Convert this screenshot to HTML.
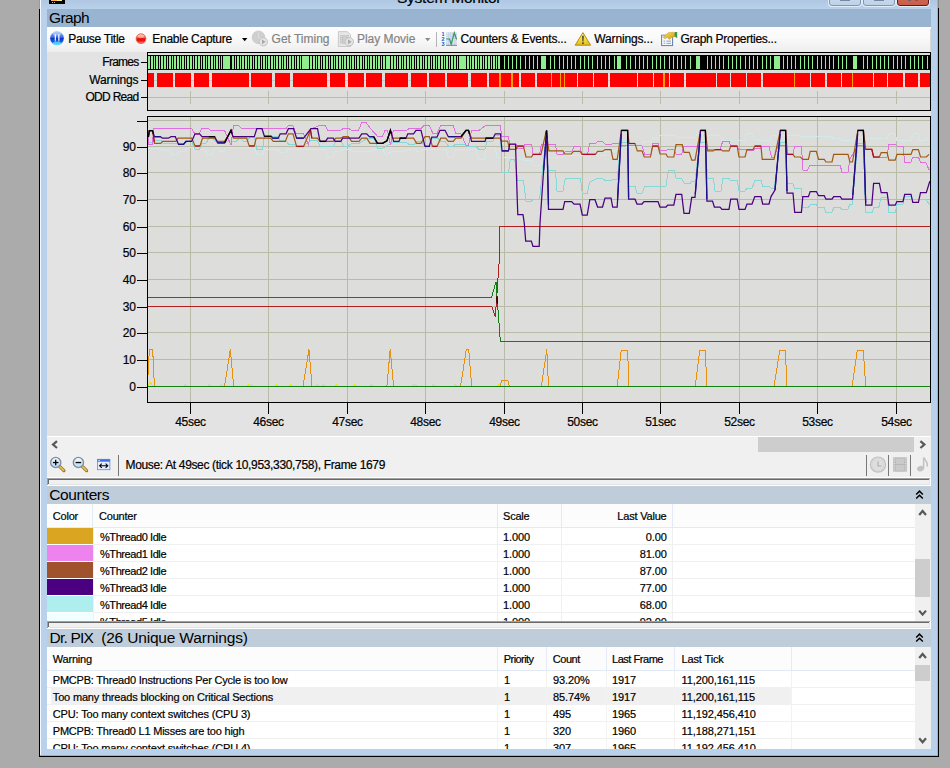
<!DOCTYPE html>
<html><head><meta charset="utf-8"><title>System Monitor</title>
<style>
html,body{margin:0;padding:0}
body{width:950px;height:768px;overflow:hidden;background:#ababab;position:relative;font-family:"Liberation Sans",sans-serif}
.a{position:absolute}
.t{position:absolute;white-space:pre;line-height:1;font-family:"Liberation Sans",sans-serif;-webkit-text-stroke:0.2px currentColor}
</style></head><body>

<div class="a" style="left:39px;top:-10px;width:900px;height:767px;background:#000"></div>
<div class="a" style="left:39px;top:0;width:1px;height:9px;background:#9a9a9a"></div>
<div class="a" style="left:938px;top:0;width:1px;height:8px;background:#8a8a8a"></div>
<div class="a" style="left:40px;top:-10px;width:898px;height:766px;background:#b9d1ea"></div>
<div class="a" style="left:40px;top:0;width:1px;height:756px;background:#f4f8fc"></div>
<div class="a" style="left:937px;top:-10px;width:1px;height:766px;background:#4cd4f4"></div>
<div class="a" style="left:40px;top:755px;width:898px;height:1px;background:#30d8fa"></div>
<div class="a" style="left:41px;top:0;width:896px;height:9px;background:linear-gradient(#afc7e3,#b9d1ea)"></div>
<div class="a" style="left:47px;top:9px;width:884px;height:740px;background:#f0f0f0"></div>
<div class="a" style="left:47px;top:9px;width:884px;height:18px;background:#99b4d1"></div>
<div class="a" style="left:47px;top:27px;width:884px;height:25px;background:linear-gradient(#fdfdfd,#fafafa 40%,#eeeeee)"></div>
<div class="a" style="left:930px;top:29px;width:1px;height:22px;background:#d8d8d8"></div>
<div class="a" style="left:47px;top:52px;width:884px;height:384px;background:#e3e3e3"></div>
<svg width="950" height="768" viewBox="0 0 950 768" style="position:absolute;left:0;top:0" shape-rendering="crispEdges">
<rect x="147" y="52" width="784" height="59" fill="#dddddb"/>
<rect x="148" y="55" width="782" height="15" fill="#000"/>
<rect x="148" y="56" width="351" height="13" fill="#90ee90"/>
<rect x="150" y="56" width="1" height="13" fill="#000"/><rect x="153" y="56" width="1" height="13" fill="#000"/><rect x="155" y="56" width="1" height="13" fill="#000"/><rect x="158" y="56" width="1" height="13" fill="#000"/><rect x="160" y="56" width="1" height="13" fill="#000"/><rect x="163" y="56" width="1" height="13" fill="#000"/><rect x="166" y="56" width="1" height="13" fill="#000"/><rect x="168" y="56" width="1" height="13" fill="#000"/><rect x="171" y="56" width="1" height="13" fill="#000"/><rect x="173" y="56" width="1" height="13" fill="#000"/><rect x="176" y="56" width="1" height="13" fill="#000"/><rect x="179" y="56" width="1" height="13" fill="#000"/><rect x="181" y="56" width="1" height="13" fill="#000"/><rect x="184" y="56" width="1" height="13" fill="#000"/><rect x="186" y="56" width="1" height="13" fill="#000"/><rect x="189" y="56" width="1" height="13" fill="#000"/><rect x="192" y="56" width="1" height="13" fill="#000"/><rect x="194" y="56" width="1" height="13" fill="#000"/><rect x="197" y="56" width="1" height="13" fill="#000"/><rect x="200" y="56" width="1" height="13" fill="#000"/><rect x="202" y="56" width="1" height="13" fill="#000"/><rect x="205" y="56" width="1" height="13" fill="#000"/><rect x="207" y="56" width="1" height="13" fill="#000"/><rect x="210" y="56" width="1" height="13" fill="#000"/><rect x="213" y="56" width="1" height="13" fill="#000"/><rect x="215" y="56" width="1" height="13" fill="#000"/><rect x="218" y="56" width="1" height="13" fill="#000"/><rect x="220" y="56" width="1" height="13" fill="#000"/><rect x="223" y="56" width="1" height="13" fill="#000"/><rect x="226" y="56" width="1" height="13" fill="#000"/><rect x="228" y="56" width="1" height="13" fill="#000"/><rect x="231" y="56" width="1" height="13" fill="#000"/><rect x="234" y="56" width="1" height="13" fill="#000"/><rect x="236" y="56" width="1" height="13" fill="#000"/><rect x="239" y="56" width="1" height="13" fill="#000"/><rect x="241" y="56" width="1" height="13" fill="#000"/><rect x="244" y="56" width="1" height="13" fill="#000"/><rect x="247" y="56" width="1" height="13" fill="#000"/><rect x="249" y="56" width="1" height="13" fill="#000"/><rect x="252" y="56" width="1" height="13" fill="#000"/><rect x="254" y="56" width="1" height="13" fill="#000"/><rect x="257" y="56" width="1" height="13" fill="#000"/><rect x="260" y="56" width="1" height="13" fill="#000"/><rect x="262" y="56" width="1" height="13" fill="#000"/><rect x="265" y="56" width="1" height="13" fill="#000"/><rect x="267" y="56" width="1" height="13" fill="#000"/><rect x="270" y="56" width="1" height="13" fill="#000"/><rect x="273" y="56" width="1" height="13" fill="#000"/><rect x="275" y="56" width="1" height="13" fill="#000"/><rect x="278" y="56" width="1" height="13" fill="#000"/><rect x="281" y="56" width="1" height="13" fill="#000"/><rect x="283" y="56" width="1" height="13" fill="#000"/><rect x="286" y="56" width="1" height="13" fill="#000"/><rect x="288" y="56" width="1" height="13" fill="#000"/><rect x="291" y="56" width="1" height="13" fill="#000"/><rect x="294" y="56" width="1" height="13" fill="#000"/><rect x="296" y="56" width="1" height="13" fill="#000"/><rect x="299" y="56" width="1" height="13" fill="#000"/><rect x="301" y="56" width="1" height="13" fill="#000"/><rect x="304" y="56" width="1" height="13" fill="#000"/><rect x="307" y="56" width="1" height="13" fill="#000"/><rect x="309" y="56" width="1" height="13" fill="#000"/><rect x="312" y="56" width="1" height="13" fill="#000"/><rect x="315" y="56" width="1" height="13" fill="#000"/><rect x="317" y="56" width="1" height="13" fill="#000"/><rect x="320" y="56" width="1" height="13" fill="#000"/><rect x="322" y="56" width="1" height="13" fill="#000"/><rect x="325" y="56" width="1" height="13" fill="#000"/><rect x="328" y="56" width="1" height="13" fill="#000"/><rect x="330" y="56" width="1" height="13" fill="#000"/><rect x="333" y="56" width="1" height="13" fill="#000"/><rect x="335" y="56" width="1" height="13" fill="#000"/><rect x="338" y="56" width="1" height="13" fill="#000"/><rect x="341" y="56" width="1" height="13" fill="#000"/><rect x="343" y="56" width="1" height="13" fill="#000"/><rect x="346" y="56" width="1" height="13" fill="#000"/><rect x="349" y="56" width="1" height="13" fill="#000"/><rect x="351" y="56" width="1" height="13" fill="#000"/><rect x="354" y="56" width="1" height="13" fill="#000"/><rect x="356" y="56" width="1" height="13" fill="#000"/><rect x="359" y="56" width="1" height="13" fill="#000"/><rect x="362" y="56" width="1" height="13" fill="#000"/><rect x="364" y="56" width="1" height="13" fill="#000"/><rect x="367" y="56" width="1" height="13" fill="#000"/><rect x="369" y="56" width="1" height="13" fill="#000"/><rect x="372" y="56" width="1" height="13" fill="#000"/><rect x="375" y="56" width="1" height="13" fill="#000"/><rect x="377" y="56" width="1" height="13" fill="#000"/><rect x="380" y="56" width="1" height="13" fill="#000"/><rect x="382" y="56" width="1" height="13" fill="#000"/><rect x="385" y="56" width="1" height="13" fill="#000"/><rect x="388" y="56" width="1" height="13" fill="#000"/><rect x="390" y="56" width="1" height="13" fill="#000"/><rect x="393" y="56" width="1" height="13" fill="#000"/><rect x="396" y="56" width="1" height="13" fill="#000"/><rect x="398" y="56" width="1" height="13" fill="#000"/><rect x="401" y="56" width="1" height="13" fill="#000"/><rect x="403" y="56" width="1" height="13" fill="#000"/><rect x="406" y="56" width="1" height="13" fill="#000"/><rect x="409" y="56" width="1" height="13" fill="#000"/><rect x="411" y="56" width="1" height="13" fill="#000"/><rect x="414" y="56" width="1" height="13" fill="#000"/><rect x="416" y="56" width="1" height="13" fill="#000"/><rect x="419" y="56" width="1" height="13" fill="#000"/><rect x="422" y="56" width="1" height="13" fill="#000"/><rect x="424" y="56" width="1" height="13" fill="#000"/><rect x="427" y="56" width="1" height="13" fill="#000"/><rect x="430" y="56" width="1" height="13" fill="#000"/><rect x="432" y="56" width="1" height="13" fill="#000"/><rect x="435" y="56" width="1" height="13" fill="#000"/><rect x="437" y="56" width="1" height="13" fill="#000"/><rect x="440" y="56" width="1" height="13" fill="#000"/><rect x="443" y="56" width="1" height="13" fill="#000"/><rect x="445" y="56" width="1" height="13" fill="#000"/><rect x="448" y="56" width="1" height="13" fill="#000"/><rect x="450" y="56" width="1" height="13" fill="#000"/><rect x="453" y="56" width="1" height="13" fill="#000"/><rect x="456" y="56" width="1" height="13" fill="#000"/><rect x="458" y="56" width="1" height="13" fill="#000"/><rect x="461" y="56" width="1" height="13" fill="#000"/><rect x="463" y="56" width="1" height="13" fill="#000"/><rect x="466" y="56" width="1" height="13" fill="#000"/><rect x="469" y="56" width="1" height="13" fill="#000"/><rect x="471" y="56" width="1" height="13" fill="#000"/><rect x="474" y="56" width="1" height="13" fill="#000"/><rect x="477" y="56" width="1" height="13" fill="#000"/><rect x="479" y="56" width="1" height="13" fill="#000"/><rect x="482" y="56" width="1" height="13" fill="#000"/><rect x="484" y="56" width="1" height="13" fill="#000"/><rect x="487" y="56" width="1" height="13" fill="#000"/><rect x="490" y="56" width="1" height="13" fill="#000"/><rect x="492" y="56" width="1" height="13" fill="#000"/><rect x="495" y="56" width="1" height="13" fill="#000"/><rect x="497" y="56" width="1" height="13" fill="#000"/>
<rect x="499" y="56" width="1" height="13" fill="#90ee90"/><rect x="504" y="56" width="1" height="13" fill="#90ee90"/><rect x="508" y="56" width="1" height="13" fill="#90ee90"/><rect x="512" y="56" width="1" height="13" fill="#90ee90"/><rect x="516" y="56" width="1" height="13" fill="#90ee90"/><rect x="520" y="56" width="1" height="13" fill="#90ee90"/><rect x="525" y="56" width="1" height="13" fill="#90ee90"/><rect x="529" y="56" width="1" height="13" fill="#90ee90"/><rect x="533" y="56" width="1" height="13" fill="#90ee90"/><rect x="537" y="56" width="1" height="13" fill="#90ee90"/><rect x="550" y="56" width="1" height="13" fill="#90ee90"/><rect x="554" y="56" width="1" height="13" fill="#90ee90"/><rect x="559" y="56" width="1" height="13" fill="#90ee90"/><rect x="563" y="56" width="1" height="13" fill="#90ee90"/><rect x="567" y="56" width="1" height="13" fill="#90ee90"/><rect x="571" y="56" width="1" height="13" fill="#90ee90"/><rect x="575" y="56" width="1" height="13" fill="#90ee90"/><rect x="580" y="56" width="1" height="13" fill="#90ee90"/><rect x="584" y="56" width="1" height="13" fill="#90ee90"/><rect x="588" y="56" width="1" height="13" fill="#90ee90"/><rect x="592" y="56" width="1" height="13" fill="#90ee90"/><rect x="597" y="56" width="1" height="13" fill="#90ee90"/><rect x="601" y="56" width="1" height="13" fill="#90ee90"/><rect x="605" y="56" width="1" height="13" fill="#90ee90"/><rect x="609" y="56" width="1" height="13" fill="#90ee90"/><rect x="614" y="56" width="1" height="13" fill="#90ee90"/><rect x="626" y="56" width="1" height="13" fill="#90ee90"/><rect x="630" y="56" width="1" height="13" fill="#90ee90"/><rect x="635" y="56" width="1" height="13" fill="#90ee90"/><rect x="639" y="56" width="1" height="13" fill="#90ee90"/><rect x="643" y="56" width="1" height="13" fill="#90ee90"/><rect x="647" y="56" width="1" height="13" fill="#90ee90"/><rect x="652" y="56" width="1" height="13" fill="#90ee90"/><rect x="656" y="56" width="1" height="13" fill="#90ee90"/><rect x="660" y="56" width="1" height="13" fill="#90ee90"/><rect x="664" y="56" width="1" height="13" fill="#90ee90"/><rect x="669" y="56" width="1" height="13" fill="#90ee90"/><rect x="673" y="56" width="1" height="13" fill="#90ee90"/><rect x="677" y="56" width="1" height="13" fill="#90ee90"/><rect x="681" y="56" width="1" height="13" fill="#90ee90"/><rect x="685" y="56" width="1" height="13" fill="#90ee90"/><rect x="690" y="56" width="1" height="13" fill="#90ee90"/><rect x="707" y="56" width="1" height="13" fill="#90ee90"/><rect x="711" y="56" width="1" height="13" fill="#90ee90"/><rect x="715" y="56" width="1" height="13" fill="#90ee90"/><rect x="719" y="56" width="1" height="13" fill="#90ee90"/><rect x="723" y="56" width="1" height="13" fill="#90ee90"/><rect x="728" y="56" width="1" height="13" fill="#90ee90"/><rect x="732" y="56" width="1" height="13" fill="#90ee90"/><rect x="736" y="56" width="1" height="13" fill="#90ee90"/><rect x="740" y="56" width="1" height="13" fill="#90ee90"/><rect x="745" y="56" width="1" height="13" fill="#90ee90"/><rect x="749" y="56" width="1" height="13" fill="#90ee90"/><rect x="753" y="56" width="1" height="13" fill="#90ee90"/><rect x="757" y="56" width="1" height="13" fill="#90ee90"/><rect x="762" y="56" width="1" height="13" fill="#90ee90"/><rect x="766" y="56" width="1" height="13" fill="#90ee90"/><rect x="770" y="56" width="1" height="13" fill="#90ee90"/><rect x="783" y="56" width="1" height="13" fill="#90ee90"/><rect x="787" y="56" width="1" height="13" fill="#90ee90"/><rect x="791" y="56" width="1" height="13" fill="#90ee90"/><rect x="795" y="56" width="1" height="13" fill="#90ee90"/><rect x="800" y="56" width="1" height="13" fill="#90ee90"/><rect x="804" y="56" width="1" height="13" fill="#90ee90"/><rect x="808" y="56" width="1" height="13" fill="#90ee90"/><rect x="812" y="56" width="1" height="13" fill="#90ee90"/><rect x="817" y="56" width="1" height="13" fill="#90ee90"/><rect x="821" y="56" width="1" height="13" fill="#90ee90"/><rect x="825" y="56" width="1" height="13" fill="#90ee90"/><rect x="829" y="56" width="1" height="13" fill="#90ee90"/><rect x="833" y="56" width="1" height="13" fill="#90ee90"/><rect x="838" y="56" width="1" height="13" fill="#90ee90"/><rect x="842" y="56" width="1" height="13" fill="#90ee90"/><rect x="846" y="56" width="1" height="13" fill="#90ee90"/><rect x="863" y="56" width="1" height="13" fill="#90ee90"/><rect x="867" y="56" width="1" height="13" fill="#90ee90"/><rect x="872" y="56" width="1" height="13" fill="#90ee90"/><rect x="876" y="56" width="1" height="13" fill="#90ee90"/><rect x="880" y="56" width="1" height="13" fill="#90ee90"/><rect x="884" y="56" width="1" height="13" fill="#90ee90"/><rect x="888" y="56" width="1" height="13" fill="#90ee90"/><rect x="893" y="56" width="1" height="13" fill="#90ee90"/><rect x="897" y="56" width="1" height="13" fill="#90ee90"/><rect x="901" y="56" width="1" height="13" fill="#90ee90"/><rect x="905" y="56" width="1" height="13" fill="#90ee90"/><rect x="910" y="56" width="1" height="13" fill="#90ee90"/><rect x="914" y="56" width="1" height="13" fill="#90ee90"/><rect x="918" y="56" width="1" height="13" fill="#90ee90"/><rect x="922" y="56" width="1" height="13" fill="#90ee90"/><rect x="927" y="56" width="1" height="13" fill="#90ee90"/>
<rect x="222" y="56" width="9" height="13" fill="#000"/>
<rect x="223" y="56" width="7" height="13" fill="#90ee90"/>
<rect x="301" y="56" width="9" height="13" fill="#000"/>
<rect x="302" y="56" width="7" height="13" fill="#90ee90"/>
<rect x="385" y="56" width="6" height="13" fill="#000"/>
<rect x="386" y="56" width="4" height="13" fill="#90ee90"/>
<rect x="458" y="56" width="9" height="13" fill="#000"/>
<rect x="459" y="56" width="7" height="13" fill="#90ee90"/>
<rect x="540" y="56" width="7" height="13" fill="#000"/>
<rect x="541" y="56" width="5" height="13" fill="#90ee90"/>
<rect x="616" y="56" width="6" height="13" fill="#000"/>
<rect x="617" y="56" width="4" height="13" fill="#90ee90"/>
<rect x="695" y="56" width="6" height="13" fill="#000"/>
<rect x="696" y="56" width="4" height="13" fill="#90ee90"/>
<rect x="773" y="56" width="8" height="13" fill="#000"/>
<rect x="774" y="56" width="6" height="13" fill="#90ee90"/>
<rect x="852" y="56" width="6" height="13" fill="#000"/>
<rect x="853" y="56" width="4" height="13" fill="#90ee90"/>
<rect x="148" y="80" width="782" height="1" fill="#c8c8b8"/>
<rect x="147.5" y="73" width="6.3" height="14" fill="#ff0000"/>
<rect x="157.0" y="73" width="15.8" height="14" fill="#ff0000"/>
<rect x="175.1" y="73" width="15.8" height="14" fill="#ff0000"/>
<rect x="194.0" y="73" width="14.8" height="14" fill="#ff0000"/>
<rect x="212.0" y="73" width="36.8" height="14" fill="#ff0000"/>
<rect x="250.9" y="73" width="21.1" height="14" fill="#ff0000"/>
<rect x="275.1" y="73" width="14.7" height="14" fill="#ff0000"/>
<rect x="293.0" y="73" width="34.1" height="14" fill="#ff0000"/>
<rect x="329.8" y="73" width="14.8" height="14" fill="#ff0000"/>
<rect x="347.8" y="73" width="16.0" height="14" fill="#ff0000"/>
<rect x="366.3" y="73" width="15.4" height="14" fill="#ff0000"/>
<rect x="384.8" y="73" width="23.2" height="14" fill="#ff0000"/>
<rect x="411.2" y="73" width="15.5" height="14" fill="#ff0000"/>
<rect x="429.0" y="73" width="15.8" height="14" fill="#ff0000"/>
<rect x="447.0" y="73" width="20.8" height="14" fill="#ff0000"/>
<rect x="471.0" y="73" width="15.7" height="14" fill="#ff0000"/>
<rect x="489.0" y="73" width="30.0" height="14" fill="#ff0000"/>
<rect x="521.0" y="73" width="13.7" height="14" fill="#ff0000"/>
<rect x="536.8" y="73" width="39.9" height="14" fill="#ff0000"/>
<rect x="578.2" y="73" width="14.7" height="14" fill="#ff0000"/>
<rect x="594.4" y="73" width="13.6" height="14" fill="#ff0000"/>
<rect x="610.2" y="73" width="26.5" height="14" fill="#ff0000"/>
<rect x="638.2" y="73" width="14.7" height="14" fill="#ff0000"/>
<rect x="654.4" y="73" width="14.3" height="14" fill="#ff0000"/>
<rect x="670.2" y="73" width="13.8" height="14" fill="#ff0000"/>
<rect x="686.2" y="73" width="29.4" height="14" fill="#ff0000"/>
<rect x="717.1" y="73" width="12.6" height="14" fill="#ff0000"/>
<rect x="731.2" y="73" width="14.3" height="14" fill="#ff0000"/>
<rect x="747.2" y="73" width="13.7" height="14" fill="#ff0000"/>
<rect x="763.0" y="73" width="46.7" height="14" fill="#ff0000"/>
<rect x="811.2" y="73" width="13.7" height="14" fill="#ff0000"/>
<rect x="827.0" y="73" width="13.9" height="14" fill="#ff0000"/>
<rect x="842.4" y="73" width="30.5" height="14" fill="#ff0000"/>
<rect x="874.4" y="73" width="12.6" height="14" fill="#ff0000"/>
<rect x="888.3" y="73" width="14.5" height="14" fill="#ff0000"/>
<rect x="904.5" y="73" width="13.2" height="14" fill="#ff0000"/>
<rect x="920.3" y="73" width="9.7" height="14" fill="#ff0000"/>
<rect x="499" y="73" width="2" height="14" fill="#ffa200"/>
<rect x="511" y="73" width="2" height="14" fill="#ffa200"/>
<rect x="551" y="73" width="1" height="14" fill="#ffa200"/>
<rect x="560" y="73" width="1" height="14" fill="#ffa200"/>
<rect x="564" y="73" width="1" height="14" fill="#ffa200"/>
<rect x="663" y="73" width="2" height="14" fill="#ffa200"/>
<rect x="794" y="73" width="1" height="14" fill="#ffa200"/>
<rect x="852" y="73" width="1" height="14" fill="#ffa200"/>
<rect x="148" y="97" width="782" height="1" fill="#bcbca8"/>
<rect x="190" y="91" width="1" height="13" fill="#bcbca8"/>
<rect x="268" y="91" width="1" height="13" fill="#bcbca8"/>
<rect x="347" y="91" width="1" height="13" fill="#bcbca8"/>
<rect x="425" y="91" width="1" height="13" fill="#bcbca8"/>
<rect x="504" y="91" width="1" height="13" fill="#bcbca8"/>
<rect x="582" y="91" width="1" height="13" fill="#bcbca8"/>
<rect x="660" y="91" width="1" height="13" fill="#bcbca8"/>
<rect x="739" y="91" width="1" height="13" fill="#bcbca8"/>
<rect x="817" y="91" width="1" height="13" fill="#bcbca8"/>
<rect x="896" y="91" width="1" height="13" fill="#bcbca8"/>
<rect x="147.5" y="52.5" width="783" height="58" fill="none" stroke="#000" stroke-width="1"/>
<rect x="141" y="62" width="6" height="1" fill="#000"/>
<rect x="141" y="80" width="6" height="1" fill="#000"/>
<rect x="141" y="97" width="6" height="1" fill="#000"/>
<rect x="147" y="116" width="784" height="287" fill="#dddddb"/>
<rect x="190" y="117" width="1" height="285" fill="#babba6"/>
<rect x="268" y="117" width="1" height="285" fill="#babba6"/>
<rect x="347" y="117" width="1" height="285" fill="#babba6"/>
<rect x="425" y="117" width="1" height="285" fill="#babba6"/>
<rect x="504" y="117" width="1" height="285" fill="#babba6"/>
<rect x="582" y="117" width="1" height="285" fill="#babba6"/>
<rect x="660" y="117" width="1" height="285" fill="#babba6"/>
<rect x="739" y="117" width="1" height="285" fill="#babba6"/>
<rect x="817" y="117" width="1" height="285" fill="#babba6"/>
<rect x="896" y="117" width="1" height="285" fill="#babba6"/>
<rect x="148" y="386" width="782" height="1" fill="#babba6"/>
<rect x="148" y="359" width="782" height="1" fill="#babba6"/>
<rect x="148" y="332" width="782" height="1" fill="#babba6"/>
<rect x="148" y="306" width="782" height="1" fill="#babba6"/>
<rect x="148" y="279" width="782" height="1" fill="#babba6"/>
<rect x="148" y="252" width="782" height="1" fill="#babba6"/>
<rect x="148" y="226" width="782" height="1" fill="#babba6"/>
<rect x="148" y="199" width="782" height="1" fill="#babba6"/>
<rect x="148" y="172" width="782" height="1" fill="#babba6"/>
<rect x="148" y="146" width="782" height="1" fill="#babba6"/>
<rect x="148" y="120" width="782" height="1" fill="#babba6"/>
</svg>
<svg width="950" height="768" viewBox="0 0 950 768" style="position:absolute;left:0;top:0" shape-rendering="crispEdges">
<clipPath id="cp"><rect x="148" y="117" width="782" height="285"/></clipPath><g clip-path="url(#cp)">
<polyline points="148.0,148.0 160.0,148.0 163.0,150.5 170.0,150.5 172.0,154.0 178.0,154.0 180.0,151.0 185.0,151.0 187.0,147.7 193.0,147.7 195.0,149.0 205.0,149.0 207.0,154.0 212.0,154.0 215.0,147.0 218.0,147.0 219.5,151.0 224.0,151.0 226.0,147.5 254.0,147.5 256.8,154.0 262.5,154.0 265.0,149.0 278.0,149.0 280.0,152.0 286.0,152.0 288.0,149.0 325.0,149.0 327.0,157.2 333.0,157.2 335.0,151.0 340.0,151.0 343.0,149.0 349.0,149.0 352.0,151.0 372.0,151.0 375.0,149.0 383.0,149.0 385.0,154.0 387.6,154.0 393.0,151.0 406.0,151.0 409.0,149.0 415.0,149.0 416.7,151.0 421.0,151.0 425.0,149.0 446.0,149.0 448.0,157.2 453.0,157.2 456.0,149.0 476.0,149.0 478.6,159.8 484.3,159.8 486.0,147.0 495.0,147.0 497.0,157.0 517.0,157.0 524.0,160.2 531.0,160.2 533.0,165.1 540.0,165.1 548.0,157.0 563.0,157.0 565.0,155.8 605.0,155.8 606.5,151.4 613.0,151.4 629.0,146.0 642.0,146.0 644.0,141.4 651.0,141.4 652.7,138.7 658.0,138.7 660.0,135.6 675.0,135.6 676.0,137.3 695.0,137.3 697.0,133.8 706.0,133.8 707.0,135.6 721.0,135.6 722.7,140.8 745.0,140.8 747.0,133.8 752.0,133.8 755.0,140.0 770.0,140.0 771.0,135.6 800.0,135.6 801.0,136.5 832.0,136.5 833.0,138.7 840.0,138.7 842.0,140.8 852.0,140.8 857.0,137.0 863.0,137.0 866.0,138.7 887.0,138.7 889.0,133.8 895.0,133.8 897.0,140.8 911.0,140.8 913.0,133.8 918.0,133.8 920.0,140.8 926.0,140.8 928.0,137.0" fill="none" stroke="#d3e8e8" stroke-width="1" />
<polyline points="148.0,142.0 153.0,142.0 154.5,140.0 160.8,140.0 163.0,143.3 185.0,143.3 187.0,141.4 191.7,141.4 195.0,149.0 199.6,149.0 202.0,143.3 206.0,143.3 208.8,138.2 213.0,138.2 215.7,141.4 236.0,141.4 238.5,138.8 241.0,138.8 243.5,141.4 247.3,141.4 249.8,137.0 254.3,137.0 256.8,149.0 262.5,149.0 264.4,136.7 278.3,136.7 280.2,140.8 286.0,140.8 288.4,144.0 293.5,144.0 296.6,146.4 303.6,146.4 304.3,145.2 310.6,140.8 317.6,140.8 320.0,146.0 333.4,146.0 336.0,141.4 341.0,141.4 343.5,146.0 348.6,146.0 351.6,143.3 359.0,143.3 367.4,138.2 374.3,138.2 377.5,148.3 382.6,148.3 393.3,142.0 406.0,142.0 409.0,144.5 414.0,144.5 416.7,141.4 421.0,141.4 425.0,146.0 429.3,146.0 432.5,138.2 437.5,138.2 440.7,141.4 445.0,141.4 448.3,146.0 453.3,146.0 455.8,144.0 463.4,144.0 466.0,146.0 474.8,146.0 478.6,149.0 485.0,149.0 486.8,141.4 493.0,141.4 495.3,135.6 500.5,135.6 502.0,172.5 508.5,172.5 510.2,159.3 514.6,159.3 517.8,180.4 523.4,180.4 526.0,201.0 531.6,201.0 533.0,199.2 539.6,199.2 546.2,133.8 548.3,170.2 555.4,170.2 557.0,191.0 563.0,191.0 565.2,178.6 580.5,178.6 582.3,193.0 587.2,193.0 589.8,182.1 597.0,178.6 602.5,178.6 605.3,180.7 611.0,180.7 613.2,179.5 617.2,179.5 620.7,142.6 627.2,142.6 629.0,186.5 635.0,186.5 637.0,193.0 642.0,193.0 644.8,186.5 666.0,186.5 668.2,170.2 674.2,170.2 676.0,178.1 681.7,178.1 684.4,183.9 689.6,183.9 691.7,181.3 695.0,181.3 699.3,142.6 705.4,142.6 707.6,178.6 713.4,178.6 715.0,191.0 721.0,191.0 722.7,178.6 729.0,178.6 730.7,180.7 737.2,180.7 739.0,191.0 745.0,191.0 747.0,188.3 752.0,188.3 754.8,180.4 761.0,180.4 762.7,186.5 769.0,186.5 771.5,188.3 774.0,188.3 780.3,142.6 785.6,142.6 787.3,183.4 792.6,183.4 794.7,188.3 801.4,188.3 802.8,207.6 808.4,207.6 810.2,204.5 816.3,204.5 818.6,207.6 824.2,207.6 826.0,212.4 832.0,212.4 833.7,207.6 840.2,207.6 842.0,209.4 848.0,209.4 849.9,204.0 852.5,204.0 857.8,143.5 863.0,143.5 865.7,212.9 872.2,212.9 874.0,207.0 878.9,207.0 881.2,197.4 887.1,197.4 888.9,212.9 895.2,212.9 897.0,204.0 903.0,204.0 904.7,196.6 911.0,196.6 912.8,199.7 926.3,199.7 929.8,205.3" fill="none" stroke="#86d8d8" stroke-width="1" />
<polyline points="148.5,137.0 148.5,144.5 152.3,144.5 153.8,128.4 191.7,128.4 195.0,134.4 199.0,134.4 201.8,128.0 207.5,128.0 210.7,130.6 224.6,130.6 231.0,145.0 233.4,125.6 238.5,125.6 241.6,128.4 286.0,128.4 288.4,125.6 293.0,125.6 296.0,133.8 303.6,133.8 308.6,145.2 310.5,129.4 318.7,125.6 325.0,125.6 328.0,130.4 340.8,130.4 343.4,128.4 348.4,128.4 351.6,130.4 358.5,130.4 361.7,122.4 366.0,122.4 370.0,128.0 377.5,136.3 382.6,136.3 385.0,130.6 387.6,130.6 390.4,145.2 393.3,130.6 406.6,130.6 409.0,128.4 421.0,128.4 424.3,125.3 429.3,125.3 433.0,133.8 436.9,133.8 440.7,125.3 453.3,125.3 455.8,133.8 461.0,133.8 466.0,145.2 468.5,145.2 471.6,130.6 478.6,130.6 486.0,125.3 500.0,125.3 502.0,136.5 508.5,136.5 509.7,144.0 516.0,144.0 517.8,148.8 523.4,148.8 525.0,144.0 531.6,144.0 533.0,154.4 539.6,154.4 541.3,144.0 555.4,144.0 557.0,154.0 563.5,154.0 565.2,151.4 571.7,151.4 574.0,146.6 580.0,146.6 581.7,154.0 587.5,154.0 589.8,143.5 595.4,143.5 597.6,141.4 602.5,141.4 605.3,144.4 611.4,144.4 613.0,143.5 619.3,143.5 620.5,145.6 642.0,145.6 644.8,154.4 651.0,154.4 652.7,143.5 658.3,143.5 660.0,150.9 666.0,150.9 667.7,149.3 673.8,149.3 676.0,154.0 681.7,154.0 684.0,146.1 705.4,146.1 707.6,149.6 720.0,149.6 722.7,141.4 729.0,141.4 730.7,146.1 737.2,146.1 739.0,149.6 747.0,149.6 748.0,150.9 753.0,150.9 754.8,148.2 761.0,148.2 762.7,146.1 769.0,146.1 771.5,157.5 774.0,157.5 778.5,145.2 785.6,145.2 787.3,154.4 793.0,154.4 794.7,146.1 801.4,146.1 803.0,170.2 807.5,170.2 809.8,165.1 840.2,165.1 842.0,172.5 848.0,172.5 849.9,159.3 857.8,145.6 863.4,145.6 865.7,149.3 871.8,149.3 873.6,157.0 887.0,157.0 888.9,144.4 895.2,144.4 897.0,146.1 903.0,146.1 904.7,162.0 911.0,162.0 912.8,157.0 918.4,157.0 920.5,162.0 925.4,162.0 929.3,170.2" fill="none" stroke="#e070e0" stroke-width="1" />
<polyline points="148.0,386.0 150.0,382.0 152.5,386.0" fill="none" stroke="#e8e000" stroke-width="1" />
<polyline points="184.0,386.0 185.5,384.6 187.0,386.0" fill="none" stroke="#e8e000" stroke-width="1" />
<polyline points="208.0,386.0 209.5,384.6 211.0,386.0" fill="none" stroke="#e8e000" stroke-width="1" />
<polyline points="220.0,386.0 221.5,384.6 223.0,386.0" fill="none" stroke="#e8e000" stroke-width="1" />
<polyline points="247.0,386.0 248.5,384.6 250.0,386.0" fill="none" stroke="#e8e000" stroke-width="1" />
<polyline points="250.0,386.0 251.5,384.6 253.0,386.0" fill="none" stroke="#e8e000" stroke-width="1" />
<polyline points="275.0,386.0 276.5,384.6 278.0,386.0" fill="none" stroke="#e8e000" stroke-width="1" />
<polyline points="289.0,386.0 290.5,384.6 292.0,386.0" fill="none" stroke="#e8e000" stroke-width="1" />
<polyline points="316.0,386.0 317.5,384.6 319.0,386.0" fill="none" stroke="#e8e000" stroke-width="1" />
<polyline points="322.0,386.0 323.5,384.6 325.0,386.0" fill="none" stroke="#e8e000" stroke-width="1" />
<polyline points="335.0,386.0 336.5,384.6 338.0,386.0" fill="none" stroke="#e8e000" stroke-width="1" />
<polyline points="353.0,386.0 354.5,384.6 356.0,386.0" fill="none" stroke="#e8e000" stroke-width="1" />
<polyline points="370.0,386.0 371.5,384.6 373.0,386.0" fill="none" stroke="#e8e000" stroke-width="1" />
<polyline points="412.0,386.0 413.5,384.6 415.0,386.0" fill="none" stroke="#e8e000" stroke-width="1" />
<polyline points="414.0,386.0 415.5,384.6 417.0,386.0" fill="none" stroke="#e8e000" stroke-width="1" />
<polyline points="432.0,386.0 433.5,384.6 435.0,386.0" fill="none" stroke="#e8e000" stroke-width="1" />
<polyline points="454.0,386.0 455.5,384.6 457.0,386.0" fill="none" stroke="#e8e000" stroke-width="1" />
<polyline points="497.0,386.0 498.5,384.6 500.0,386.0" fill="none" stroke="#e8e000" stroke-width="1" />
<polyline points="148.2,374.5 149.3,349.5 152.7,349.5 154.0,377.8 154.7,386.0" fill="none" stroke="#e8900c" stroke-width="1" />
<polyline points="224.6,386.0 230.3,349.5 230.3,349.5 233.7,386.0" fill="none" stroke="#e8900c" stroke-width="1" />
<polyline points="303.0,386.0 309.0,349.5 309.0,349.5 312.0,386.0" fill="none" stroke="#e8900c" stroke-width="1" />
<polyline points="386.9,386.0 390.2,349.5 390.2,349.5 393.6,386.0" fill="none" stroke="#e8900c" stroke-width="1" />
<polyline points="460.6,386.0 466.3,349.5 468.7,349.5 471.7,386.0" fill="none" stroke="#e8900c" stroke-width="1" />
<polyline points="500.3,386.0 501.7,380.0 507.7,380.0 509.4,386.0" fill="none" stroke="#e8900c" stroke-width="1" />
<polyline points="541.4,386.0 546.8,349.5 546.8,349.5 548.5,386.0" fill="none" stroke="#e8900c" stroke-width="1" />
<polyline points="617.2,386.0 621.2,350.2 627.6,350.2 629.0,386.0" fill="none" stroke="#e8900c" stroke-width="1" />
<polyline points="695.3,386.0 699.7,350.2 705.4,350.2 706.7,386.0" fill="none" stroke="#e8900c" stroke-width="1" />
<polyline points="774.1,386.0 779.8,350.2 785.6,350.2 786.6,386.0" fill="none" stroke="#e8900c" stroke-width="1" />
<polyline points="852.2,386.0 857.3,350.2 863.3,350.2 865.7,386.0" fill="none" stroke="#e8900c" stroke-width="1" />
<polyline points="147.5,306.1 491.6,306.1 495.3,317.2 499.3,260.0 500.0,226.4 930.0,226.4" fill="none" stroke="#b02020" stroke-width="1" />
<polyline points="147.5,297.4 491.6,297.4 496.0,281.9 500.3,341.1 930.0,341.1" fill="none" stroke="#108010" stroke-width="1" />
<rect x="148" y="386" width="782" height="1" fill="#108010"/>
<polyline points="148.4,137.0 149.3,130.8 152.6,130.8 154.5,143.3 160.8,143.3 162.7,141.4 176.0,141.4 178.0,138.2 191.8,138.2 195.0,146.0 200.0,146.0 202.5,138.2 215.0,138.2 217.6,141.4 224.6,141.4 231.0,130.6 233.4,138.2 246.7,138.2 249.2,146.0 254.3,146.0 256.2,138.2 270.7,138.2 273.3,141.4 285.3,141.4 288.4,133.8 293.0,133.8 296.6,146.4 303.6,146.4 310.5,130.0 311.8,138.2 317.5,138.2 320.0,141.4 333.3,141.4 335.8,138.2 340.8,138.2 343.4,136.7 348.4,136.7 351.6,141.4 359.0,141.4 361.7,138.2 366.7,138.2 370.0,143.3 382.6,143.3 387.0,140.7 390.4,130.6 392.7,138.2 413.5,138.2 416.7,143.3 421.0,143.3 425.0,136.7 429.3,136.7 432.5,146.4 437.0,146.4 440.7,138.2 445.7,138.2 448.3,141.4 453.3,141.4 455.8,138.2 461.0,138.2 466.0,130.6 468.5,130.6 471.6,138.2 500.0,138.2 501.4,141.2 507.6,141.2 509.7,149.3 516.0,149.3 517.2,146.1 523.4,146.1 526.0,157.0 531.6,157.0 533.0,154.4 541.0,154.4 546.2,131.2 548.9,150.9 563.0,150.9 564.7,154.0 571.2,154.0 573.5,151.4 580.0,151.4 582.3,154.4 595.4,154.4 597.6,151.4 602.5,151.4 605.0,149.6 611.0,149.6 613.0,159.3 617.2,159.3 621.4,130.6 627.6,130.6 629.0,143.5 635.0,143.5 637.3,150.9 642.0,150.9 644.3,157.0 650.4,157.0 652.7,146.1 658.0,146.1 660.0,154.0 666.0,154.0 667.7,157.0 673.8,157.0 676.0,144.7 682.2,144.7 684.0,152.3 689.3,152.3 691.7,160.2 695.0,160.2 700.5,130.6 705.4,130.6 707.6,150.9 713.4,150.9 715.0,149.6 721.0,149.6 722.7,150.9 729.0,150.9 730.7,146.1 737.2,146.1 739.0,157.0 745.0,157.0 747.0,149.6 753.0,149.6 754.8,146.1 761.0,146.1 762.2,159.3 774.0,159.3 780.3,130.6 785.6,130.6 787.3,154.4 793.0,154.4 794.7,157.0 800.5,157.0 802.8,159.3 808.4,159.3 810.2,151.4 816.3,151.4 818.6,159.3 824.2,159.3 826.0,162.0 832.0,162.0 833.7,154.4 848.0,154.4 849.9,162.0 852.5,162.0 857.8,130.6 863.4,130.6 865.7,149.3 871.8,149.3 873.6,157.0 879.4,157.0 881.2,152.6 887.1,152.6 888.9,160.2 895.2,160.2 897.0,154.4 911.0,154.4 912.8,149.6 918.4,149.6 920.5,157.0 926.3,157.0 929.0,154.4" fill="none" stroke="#a05a10" stroke-width="1.2" shape-rendering="geometricPrecision"/>
<polyline points="153.3,134.0 154.3,142.0" fill="none" stroke="#b00828" stroke-width="1.2" shape-rendering="geometricPrecision"/>
<polyline points="195.0,146.0 200.0,146.0" fill="none" stroke="#b00828" stroke-width="1.2" shape-rendering="geometricPrecision"/>
<polyline points="249.2,146.0 254.3,146.0" fill="none" stroke="#b00828" stroke-width="1.2" shape-rendering="geometricPrecision"/>
<polyline points="296.6,146.4 303.6,146.4" fill="none" stroke="#b00828" stroke-width="1.2" shape-rendering="geometricPrecision"/>
<polyline points="310.5,130.0 311.8,138.2" fill="none" stroke="#b00828" stroke-width="1.2" shape-rendering="geometricPrecision"/>
<polyline points="432.5,146.4 437.0,146.4" fill="none" stroke="#b00828" stroke-width="1.2" shape-rendering="geometricPrecision"/>
<polyline points="517.2,146.1 523.4,146.1" fill="none" stroke="#b00828" stroke-width="1.2" shape-rendering="geometricPrecision"/>
<polyline points="533.0,154.4 541.0,154.4" fill="none" stroke="#b00828" stroke-width="1.2" shape-rendering="geometricPrecision"/>
<polyline points="582.3,154.4 595.4,154.4" fill="none" stroke="#b00828" stroke-width="1.2" shape-rendering="geometricPrecision"/>
<polyline points="629.0,143.5 635.0,143.5" fill="none" stroke="#b00828" stroke-width="1.2" shape-rendering="geometricPrecision"/>
<polyline points="652.7,146.1 658.0,146.1" fill="none" stroke="#b00828" stroke-width="1.2" shape-rendering="geometricPrecision"/>
<polyline points="715.0,149.6 721.0,149.6" fill="none" stroke="#b00828" stroke-width="1.2" shape-rendering="geometricPrecision"/>
<polyline points="730.7,146.1 737.2,146.1" fill="none" stroke="#b00828" stroke-width="1.2" shape-rendering="geometricPrecision"/>
<polyline points="754.8,146.1 761.0,146.1" fill="none" stroke="#b00828" stroke-width="1.2" shape-rendering="geometricPrecision"/>
<polyline points="787.3,154.4 793.0,154.4" fill="none" stroke="#b00828" stroke-width="1.2" shape-rendering="geometricPrecision"/>
<polyline points="865.7,149.3 871.8,149.3 873.6,157.0 879.4,157.0" fill="none" stroke="#b00828" stroke-width="1.2" shape-rendering="geometricPrecision"/>
<polyline points="148.4,137.0 149.3,130.6 152.5,130.6 154.5,136.7 160.4,136.7 162.4,138.2 168.4,138.2 171.0,136.7 175.3,136.7 178.5,144.3 183.5,144.3 186.0,141.4 191.7,141.4 195.0,133.8 199.6,133.8 202.0,136.7 214.7,136.7 217.6,142.9 224.6,142.9 231.0,130.3 233.0,136.7 254.3,136.7 256.8,128.7 262.0,128.7 264.4,136.3 271.4,136.3 272.6,138.2 278.3,138.2 280.2,133.8 286.0,133.8 288.4,128.7 293.5,128.7 296.6,138.2 303.6,138.2 311.0,128.7 317.5,128.7 320.0,141.4 325.7,141.4 327.6,138.2 333.3,138.2 335.0,141.4 340.8,141.4 342.7,138.2 359.0,138.2 361.7,133.8 366.7,133.8 369.3,136.7 373.7,136.7 377.5,143.3 382.6,143.3 387.0,140.7 390.4,130.3 393.7,141.4 399.0,141.4 400.3,138.2 406.0,138.2 407.8,133.8 413.5,133.8 416.0,130.3 421.0,130.3 425.0,146.4 429.3,146.4 431.8,137.0 437.0,137.0 440.0,130.3 445.0,130.3 448.3,136.7 461.0,136.7 466.0,130.3 468.5,130.3 471.6,141.4 485.0,141.4 486.0,138.2 493.0,138.2 495.3,133.8 500.5,133.8 502.0,150.9 508.5,150.9 509.7,144.0 515.5,144.0 517.2,198.0 517.8,214.7 523.0,214.7 524.3,223.4 525.7,241.0 531.3,241.0 533.0,246.3 539.2,246.3 540.0,223.4 541.3,204.0 543.6,170.7 546.6,130.3 547.6,169.0 548.5,209.4 563.0,209.4 564.7,201.5 571.7,201.5 574.0,204.1 580.0,204.1 582.3,215.0 587.2,215.0 589.8,199.7 595.0,199.7 597.6,207.0 602.5,207.0 605.0,198.0 611.0,198.0 612.7,207.0 617.2,207.0 621.4,130.3 627.6,130.3 628.6,199.2 635.0,199.2 637.0,204.0 642.0,204.0 644.0,201.5 658.0,201.5 660.0,207.0 666.0,207.0 667.7,205.0 673.8,205.0 676.0,194.4 681.7,194.4 684.0,213.3 689.3,213.3 691.7,197.4 695.0,197.4 700.5,130.3 705.4,130.3 706.9,201.0 712.5,201.0 714.4,207.0 720.0,207.0 722.0,209.4 729.0,209.4 730.7,199.2 737.2,199.2 739.0,209.4 745.0,209.4 747.0,204.0 752.0,204.0 754.8,196.6 761.0,196.6 762.7,204.0 769.0,204.0 771.0,196.6 775.0,190.0 780.3,130.3 785.6,130.3 787.0,193.0 793.0,193.0 794.7,212.4 801.4,212.4 802.8,196.6 808.4,196.6 810.2,191.5 816.3,191.5 818.6,195.7 824.2,195.7 826.0,199.2 832.0,199.2 833.7,196.6 840.2,196.6 842.0,199.2 852.5,199.2 857.8,130.3 863.4,130.3 865.7,205.0 871.8,205.0 873.6,183.4 879.4,183.4 881.2,192.7 887.1,192.7 888.9,205.0 895.2,205.0 897.0,201.5 903.0,201.5 904.7,194.4 911.0,194.4 912.8,202.4 918.4,202.4 920.5,192.7 926.3,192.7 929.8,181.3" fill="none" stroke="#4b0082" stroke-width="1.25" shape-rendering="geometricPrecision"/>
<polyline points="154.5,136.7 160.4,136.7" fill="none" stroke="#18108c" stroke-width="1.25" shape-rendering="geometricPrecision"/>
<polyline points="178.5,144.3 183.5,144.3 186.0,141.4 191.7,141.4" fill="none" stroke="#18108c" stroke-width="1.25" shape-rendering="geometricPrecision"/>
<polyline points="217.6,142.9 224.6,142.9" fill="none" stroke="#18108c" stroke-width="1.25" shape-rendering="geometricPrecision"/>
<polyline points="272.6,138.2 278.3,138.2" fill="none" stroke="#18108c" stroke-width="1.25" shape-rendering="geometricPrecision"/>
<polyline points="296.6,138.2 303.6,138.2" fill="none" stroke="#18108c" stroke-width="1.25" shape-rendering="geometricPrecision"/>
<polyline points="335.0,141.4 340.8,141.4" fill="none" stroke="#18108c" stroke-width="1.25" shape-rendering="geometricPrecision"/>
<polyline points="369.3,136.7 373.7,136.7" fill="none" stroke="#18108c" stroke-width="1.25" shape-rendering="geometricPrecision"/>
<polyline points="425.0,146.4 429.3,146.4" fill="none" stroke="#18108c" stroke-width="1.25" shape-rendering="geometricPrecision"/>
<polyline points="448.3,136.7 455.0,136.7" fill="none" stroke="#18108c" stroke-width="1.25" shape-rendering="geometricPrecision"/>
<polyline points="502.0,150.9 508.5,150.9" fill="none" stroke="#18108c" stroke-width="1.25" shape-rendering="geometricPrecision"/>
<polyline points="543.6,170.7 546.4,134.0" fill="none" stroke="#18108c" stroke-width="1.25" shape-rendering="geometricPrecision"/>
<polyline points="547.1,138.0 547.6,169.0 548.5,205.0" fill="none" stroke="#18108c" stroke-width="1.25" shape-rendering="geometricPrecision"/>
<polyline points="617.5,200.0 621.2,134.0" fill="none" stroke="#18108c" stroke-width="1.25" shape-rendering="geometricPrecision"/>
<polyline points="627.9,143.0 628.6,197.0" fill="none" stroke="#18108c" stroke-width="1.25" shape-rendering="geometricPrecision"/>
<polyline points="695.3,194.0 700.3,134.0" fill="none" stroke="#18108c" stroke-width="1.25" shape-rendering="geometricPrecision"/>
<polyline points="705.7,143.0 706.9,199.0" fill="none" stroke="#18108c" stroke-width="1.25" shape-rendering="geometricPrecision"/>
<polyline points="775.0,190.0 780.1,134.0" fill="none" stroke="#18108c" stroke-width="1.25" shape-rendering="geometricPrecision"/>
<polyline points="785.9,143.0 787.0,191.0" fill="none" stroke="#18108c" stroke-width="1.25" shape-rendering="geometricPrecision"/>
<polyline points="852.8,195.0 857.6,134.0" fill="none" stroke="#18108c" stroke-width="1.25" shape-rendering="geometricPrecision"/>
<polyline points="863.9,143.0 865.7,203.0" fill="none" stroke="#18108c" stroke-width="1.25" shape-rendering="geometricPrecision"/>
<polyline points="496.9,296.5 497.3,303.5" fill="none" stroke="#000" stroke-width="1.3" shape-rendering="geometricPrecision"/>
<polyline points="148.4,137.0 149.3,130.6 152.5,130.6 153.3,134.0" fill="none" stroke="#000" stroke-width="1.3" shape-rendering="geometricPrecision"/>
<polyline points="208.8,136.7 214.7,136.7" fill="none" stroke="#000" stroke-width="1.3" shape-rendering="geometricPrecision"/>
<polyline points="224.6,142.9 231.0,130.3 232.0,133.5" fill="none" stroke="#000" stroke-width="1.3" shape-rendering="geometricPrecision"/>
<polyline points="264.4,136.3 271.4,136.3" fill="none" stroke="#000" stroke-width="1.3" shape-rendering="geometricPrecision"/>
<polyline points="320.0,141.4 325.7,141.4" fill="none" stroke="#000" stroke-width="1.3" shape-rendering="geometricPrecision"/>
<polyline points="373.7,136.7 377.5,143.3 382.6,143.3 387.0,140.7 390.4,130.3 391.5,134.0" fill="none" stroke="#000" stroke-width="1.3" shape-rendering="geometricPrecision"/>
<polyline points="399.5,138.2 406.0,138.2" fill="none" stroke="#000" stroke-width="1.3" shape-rendering="geometricPrecision"/>
<polyline points="461.0,136.7 466.0,130.3 468.5,130.3 469.5,134.0" fill="none" stroke="#000" stroke-width="1.3" shape-rendering="geometricPrecision"/>
<polyline points="485.5,138.2 493.0,138.2" fill="none" stroke="#000" stroke-width="1.3" shape-rendering="geometricPrecision"/>
<polyline points="546.0,134.0 546.6,130.3 547.1,138.0" fill="none" stroke="#000" stroke-width="1.3" shape-rendering="geometricPrecision"/>
<polyline points="621.4,130.3 627.6,130.3 627.9,143.0" fill="none" stroke="#000" stroke-width="1.3" shape-rendering="geometricPrecision"/>
<polyline points="700.5,130.3 705.4,130.3 705.7,143.0" fill="none" stroke="#000" stroke-width="1.3" shape-rendering="geometricPrecision"/>
<polyline points="780.3,130.3 785.6,130.3 785.9,143.0" fill="none" stroke="#000" stroke-width="1.3" shape-rendering="geometricPrecision"/>
<polyline points="857.8,130.3 863.4,130.3 863.9,143.0" fill="none" stroke="#000" stroke-width="1.3" shape-rendering="geometricPrecision"/>
</g>
<rect x="147.5" y="116.5" width="783" height="286" fill="none" stroke="#000" stroke-width="1"/>
<rect x="137" y="387" width="10" height="1" fill="#000"/>
<rect x="137" y="360" width="10" height="1" fill="#000"/>
<rect x="137" y="333" width="10" height="1" fill="#000"/>
<rect x="137" y="307" width="10" height="1" fill="#000"/>
<rect x="137" y="280" width="10" height="1" fill="#000"/>
<rect x="137" y="253" width="10" height="1" fill="#000"/>
<rect x="137" y="227" width="10" height="1" fill="#000"/>
<rect x="137" y="200" width="10" height="1" fill="#000"/>
<rect x="137" y="173" width="10" height="1" fill="#000"/>
<rect x="137" y="147" width="10" height="1" fill="#000"/>
<rect x="137" y="121" width="10" height="1" fill="#000"/>
<rect x="190" y="403" width="1" height="11" fill="#000"/>
<rect x="268" y="403" width="1" height="11" fill="#000"/>
<rect x="347" y="403" width="1" height="11" fill="#000"/>
<rect x="425" y="403" width="1" height="11" fill="#000"/>
<rect x="504" y="403" width="1" height="11" fill="#000"/>
<rect x="582" y="403" width="1" height="11" fill="#000"/>
<rect x="660" y="403" width="1" height="11" fill="#000"/>
<rect x="739" y="403" width="1" height="11" fill="#000"/>
<rect x="817" y="403" width="1" height="11" fill="#000"/>
<rect x="896" y="403" width="1" height="11" fill="#000"/>
</svg>
<div class="a" style="left:40px;top:0;width:897px;height:9px;overflow:hidden"><div class="t" style="left:357px;top:-10px;font-size:15.5px;color:#000;letter-spacing:-0.25px">System Monitor</div><div class="a" style="left:788px;top:-14px;width:34px;height:21px;border-radius:4px;background:#e6eff9;opacity:0.9"></div><div class="a" style="left:789px;top:-14px;width:32px;height:20px;border:1px solid #8496ad;border-radius:3px;background:linear-gradient(#d3e2f3,#bdd3ea);box-sizing:border-box"></div><div class="a" style="left:822px;top:-14px;width:34px;height:21px;border-radius:4px;background:#e6eff9;opacity:0.9"></div><div class="a" style="left:823px;top:-14px;width:32px;height:20px;border:1px solid #8496ad;border-radius:3px;background:linear-gradient(#d3e2f3,#bdd3ea);box-sizing:border-box"></div><div class="a" style="left:856px;top:-14px;width:34px;height:21px;border-radius:4px;background:#e6eff9;opacity:0.9"></div><div class="a" style="left:857px;top:-14px;width:32px;height:20px;border:1px solid #5a1e18;border-radius:3px;background:linear-gradient(#e09a8a,#cd6650 60%,#c95e48);box-sizing:border-box"></div><div class="a" style="left:800px;top:0;width:10px;height:1px;background:#45556c;opacity:0.6"></div><div class="a" style="left:834px;top:0;width:10px;height:1px;background:#45556c;opacity:0.6"></div><div class="a" style="left:868px;top:0;width:3px;height:1px;background:#4a5578;opacity:0.6"></div><div class="a" style="left:875px;top:0;width:3px;height:1px;background:#4a5578;opacity:0.6"></div><div class="a" style="left:9px;top:-4px;width:16px;height:8px;background:#000"></div><div class="a" style="left:11px;top:-4px;width:6px;height:5px;background:#ffb050"></div><div class="a" style="left:17px;top:-4px;width:5px;height:5px;background:#fff080"></div><div class="a" style="left:12px;top:2px;width:1px;height:1px;background:#bbb"></div><div class="a" style="left:14px;top:2px;width:1px;height:1px;background:#bbb"></div></div>
<div class="t" style="left:49.0px;top:9.8px;font-size:15.5px;color:#000;letter-spacing:-0.618px;-webkit-text-stroke:0;">Graph</div>
<div class="t" style="left:68.3px;top:33.3px;font-size:12px;color:#000;letter-spacing:-0.271px;">Pause Title</div>
<div class="t" style="left:152.3px;top:33.3px;font-size:12px;color:#000;letter-spacing:-0.271px;">Enable Capture</div>
<div class="t" style="left:271.6px;top:33.3px;font-size:12px;color:#848484;letter-spacing:-0.013px;">Get Timing</div>
<div class="t" style="left:357.0px;top:33.3px;font-size:12px;color:#848484;letter-spacing:-0.039px;">Play Movie</div>
<div class="t" style="left:460.5px;top:33.3px;font-size:12px;color:#000;letter-spacing:-0.198px;">Counters &amp; Events...</div>
<div class="t" style="left:594.3px;top:33.3px;font-size:12px;color:#000;letter-spacing:-0.150px;">Warnings...</div>
<div class="t" style="left:680.5px;top:33.3px;font-size:12px;color:#000;letter-spacing:-0.273px;">Graph Properties...</div>
<div class="t" style="right:811.5px;top:56.2px;font-size:12px;color:#000;letter-spacing:-0.745px;">Frames</div>
<div class="t" style="right:811.5px;top:74.2px;font-size:12px;color:#000;letter-spacing:-0.131px;">Warnings</div>
<div class="t" style="right:811.5px;top:91.2px;font-size:12px;color:#000;letter-spacing:-0.711px;">ODD Read</div>
<div class="t" style="right:814.4px;top:380.6px;font-size:12px;color:#000;letter-spacing:-0.2px;">0</div>
<div class="t" style="right:814.4px;top:353.6px;font-size:12px;color:#000;letter-spacing:-0.2px;">10</div>
<div class="t" style="right:814.4px;top:326.6px;font-size:12px;color:#000;letter-spacing:-0.2px;">20</div>
<div class="t" style="right:814.4px;top:300.6px;font-size:12px;color:#000;letter-spacing:-0.2px;">30</div>
<div class="t" style="right:814.4px;top:273.6px;font-size:12px;color:#000;letter-spacing:-0.2px;">40</div>
<div class="t" style="right:814.4px;top:246.6px;font-size:12px;color:#000;letter-spacing:-0.2px;">50</div>
<div class="t" style="right:814.4px;top:220.6px;font-size:12px;color:#000;letter-spacing:-0.2px;">60</div>
<div class="t" style="right:814.4px;top:193.6px;font-size:12px;color:#000;letter-spacing:-0.2px;">70</div>
<div class="t" style="right:814.4px;top:166.6px;font-size:12px;color:#000;letter-spacing:-0.2px;">80</div>
<div class="t" style="right:814.4px;top:140.6px;font-size:12px;color:#000;letter-spacing:-0.2px;">90</div>
<div class="t" style="left:90.5px;width:200px;text-align:center;top:416.3px;font-size:12px;color:#000;letter-spacing:-0.3px;">45sec</div>
<div class="t" style="left:168.5px;width:200px;text-align:center;top:416.3px;font-size:12px;color:#000;letter-spacing:-0.3px;">46sec</div>
<div class="t" style="left:247.5px;width:200px;text-align:center;top:416.3px;font-size:12px;color:#000;letter-spacing:-0.3px;">47sec</div>
<div class="t" style="left:325.5px;width:200px;text-align:center;top:416.3px;font-size:12px;color:#000;letter-spacing:-0.3px;">48sec</div>
<div class="t" style="left:404.5px;width:200px;text-align:center;top:416.3px;font-size:12px;color:#000;letter-spacing:-0.3px;">49sec</div>
<div class="t" style="left:482.5px;width:200px;text-align:center;top:416.3px;font-size:12px;color:#000;letter-spacing:-0.3px;">50sec</div>
<div class="t" style="left:560.5px;width:200px;text-align:center;top:416.3px;font-size:12px;color:#000;letter-spacing:-0.3px;">51sec</div>
<div class="t" style="left:639.5px;width:200px;text-align:center;top:416.3px;font-size:12px;color:#000;letter-spacing:-0.3px;">52sec</div>
<div class="t" style="left:717.5px;width:200px;text-align:center;top:416.3px;font-size:12px;color:#000;letter-spacing:-0.3px;">53sec</div>
<div class="t" style="left:796.5px;width:200px;text-align:center;top:416.3px;font-size:12px;color:#000;letter-spacing:-0.3px;">54sec</div>
<div class="a" style="left:47px;top:436px;width:884px;height:17px;background:#f0f0f0"></div>
<div class="a" style="left:47px;top:436px;width:884px;height:1px;background:#fff"></div>
<div class="a" style="left:758px;top:437px;width:156px;height:15px;background:#cdcdcd"></div>
<div class="a" style="left:47px;top:453px;width:884px;height:25px;background:#f0f0f0"></div>
<div class="a" style="left:118px;top:455px;width:1px;height:21px;background:#787878"></div>
<div class="a" style="left:866px;top:455px;width:1px;height:21px;background:#787878"></div>
<div class="a" style="left:888px;top:455px;width:1px;height:21px;background:#787878"></div>
<div class="a" style="left:910px;top:455px;width:1px;height:21px;background:#787878"></div>
<div class="t" style="left:125.5px;top:459.2px;font-size:12px;color:#000;letter-spacing:-0.340px;">Mouse: At 49sec (tick 10,953,330,758), Frame 1679</div>
<div class="a" style="left:47px;top:477px;width:884px;height:1px;background:#fff"></div>
<div class="a" style="left:47px;top:478px;width:884px;height:8px;background:#f0f0f0"></div><div class="a" style="left:47px;top:478px;width:883px;height:1px;background:#a0a0a0"></div><div class="a" style="left:47px;top:478px;width:1px;height:7px;background:#a0a0a0"></div><div class="a" style="left:48px;top:479px;width:881px;height:1px;background:#696969"></div><div class="a" style="left:48px;top:479px;width:1px;height:5px;background:#696969"></div><div class="a" style="left:49px;top:484px;width:881px;height:1px;background:#e3e3e3"></div><div class="a" style="left:929px;top:479px;width:1px;height:6px;background:#e3e3e3"></div><div class="a" style="left:930px;top:478px;width:1px;height:8px;background:#fff"></div><div class="a" style="left:47px;top:485px;width:884px;height:1px;background:#fff"></div>
<div class="a" style="left:47px;top:486px;width:884px;height:18px;background:#bfcddb"></div>
<div class="t" style="left:49.3px;top:486.8px;font-size:15.5px;color:#000;letter-spacing:-0.401px;-webkit-text-stroke:0;">Counters</div>
<div class="a" style="left:47px;top:504px;width:868px;height:117px;background:#fff;overflow:hidden" id="ct">
<div class="a" style="left:0;top:0;width:868px;height:23px;background:#fcfcfc;border-bottom:1px solid #e2eaf6"></div>
<div class="a" style="left:45px;top:0;width:1px;height:23px;background:#e2eaf6"></div>
<div class="a" style="left:46px;top:24px;width:1px;height:93px;background:#f0f0f0"></div>
<div class="a" style="left:450px;top:0;width:1px;height:23px;background:#e2eaf6"></div>
<div class="a" style="left:450px;top:24px;width:1px;height:93px;background:#f0f0f0"></div>
<div class="a" style="left:514px;top:0;width:1px;height:23px;background:#e2eaf6"></div>
<div class="a" style="left:514px;top:24px;width:1px;height:93px;background:#f0f0f0"></div>
<div class="a" style="left:625px;top:0;width:1px;height:23px;background:#e2eaf6"></div>
<div class="a" style="left:625px;top:24px;width:1px;height:93px;background:#f0f0f0"></div>
<div class="t" style="left:5.8px;top:6.5px;font-size:11px;letter-spacing:-0.2px">Color</div>
<div class="t" style="left:52.0px;top:6.5px;font-size:11px;letter-spacing:-0.2px">Counter</div>
<div class="t" style="left:456.0px;top:6.5px;font-size:11px;letter-spacing:-0.2px">Scale</div>
<div class="t" style="right:248.5px;top:6.5px;font-size:11px;letter-spacing:-0.2px">Last Value</div>
<div class="a" style="left:0;top:24px;width:46px;height:16px;background:#daa520"></div>
<div class="a" style="left:46px;top:40px;width:822px;height:1px;background:#f0f0f0"></div>
<div class="t" style="left:53.0px;top:28.0px;font-size:11px;letter-spacing:-0.42px">%Thread0 Idle</div>
<div class="t" style="left:456.0px;top:28.0px;font-size:11px;letter-spacing:-0.1px">1.000</div>
<div class="t" style="right:248.2px;top:28.0px;font-size:11px;letter-spacing:-0.1px">0.00</div>
<div class="a" style="left:0;top:41px;width:46px;height:16px;background:#ee82ee"></div>
<div class="a" style="left:46px;top:57px;width:822px;height:1px;background:#f0f0f0"></div>
<div class="t" style="left:53.0px;top:45.0px;font-size:11px;letter-spacing:-0.42px">%Thread1 Idle</div>
<div class="t" style="left:456.0px;top:45.0px;font-size:11px;letter-spacing:-0.1px">1.000</div>
<div class="t" style="right:248.2px;top:45.0px;font-size:11px;letter-spacing:-0.1px">81.00</div>
<div class="a" style="left:0;top:58px;width:46px;height:16px;background:#a0522d"></div>
<div class="a" style="left:46px;top:74px;width:822px;height:1px;background:#f0f0f0"></div>
<div class="t" style="left:53.0px;top:62.0px;font-size:11px;letter-spacing:-0.42px">%Thread2 Idle</div>
<div class="t" style="left:456.0px;top:62.0px;font-size:11px;letter-spacing:-0.1px">1.000</div>
<div class="t" style="right:248.2px;top:62.0px;font-size:11px;letter-spacing:-0.1px">87.00</div>
<div class="a" style="left:0;top:75px;width:46px;height:16px;background:#4b0082"></div>
<div class="a" style="left:46px;top:91px;width:822px;height:1px;background:#f0f0f0"></div>
<div class="t" style="left:53.0px;top:79.0px;font-size:11px;letter-spacing:-0.42px">%Thread3 Idle</div>
<div class="t" style="left:456.0px;top:79.0px;font-size:11px;letter-spacing:-0.1px">1.000</div>
<div class="t" style="right:248.2px;top:79.0px;font-size:11px;letter-spacing:-0.1px">77.00</div>
<div class="a" style="left:0;top:92px;width:46px;height:16px;background:#afeeee"></div>
<div class="a" style="left:46px;top:108px;width:822px;height:1px;background:#f0f0f0"></div>
<div class="t" style="left:53.0px;top:96.0px;font-size:11px;letter-spacing:-0.42px">%Thread4 Idle</div>
<div class="t" style="left:456.0px;top:96.0px;font-size:11px;letter-spacing:-0.1px">1.000</div>
<div class="t" style="right:248.2px;top:96.0px;font-size:11px;letter-spacing:-0.1px">68.00</div>
<div class="a" style="left:0;top:109px;width:46px;height:16px;background:#f0ffff"></div>
<div class="a" style="left:46px;top:125px;width:822px;height:1px;background:#f0f0f0"></div>
<div class="t" style="left:53.0px;top:113.0px;font-size:11px;letter-spacing:-0.42px">%Thread5 Idle</div>
<div class="t" style="left:456.0px;top:113.0px;font-size:11px;letter-spacing:-0.1px">1.000</div>
<div class="t" style="right:248.2px;top:113.0px;font-size:11px;letter-spacing:-0.1px">92.00</div>
</div>
<div class="a" style="left:915px;top:504px;width:16px;height:117px;background:#f0f0f0"></div>
<div class="a" style="left:915px;top:559px;width:15px;height:38px;background:#cdcdcd"></div>
<div class="a" style="left:47px;top:621px;width:884px;height:8px;background:#f0f0f0"></div><div class="a" style="left:47px;top:621px;width:883px;height:1px;background:#a0a0a0"></div><div class="a" style="left:47px;top:621px;width:1px;height:7px;background:#a0a0a0"></div><div class="a" style="left:48px;top:622px;width:881px;height:1px;background:#696969"></div><div class="a" style="left:48px;top:622px;width:1px;height:5px;background:#696969"></div><div class="a" style="left:49px;top:627px;width:881px;height:1px;background:#e3e3e3"></div><div class="a" style="left:929px;top:622px;width:1px;height:6px;background:#e3e3e3"></div><div class="a" style="left:930px;top:621px;width:1px;height:8px;background:#fff"></div><div class="a" style="left:47px;top:628px;width:884px;height:1px;background:#fff"></div>
<div class="a" style="left:47px;top:629px;width:884px;height:18px;background:#bfcddb"></div>
<div class="t" style="left:49.6px;top:629.8px;font-size:15.5px;color:#000;letter-spacing:-0.816px;-webkit-text-stroke:0;">Dr. PIX</div>
<div class="t" style="left:101.2px;top:629.8px;font-size:15.5px;color:#000;letter-spacing:-0.180px;-webkit-text-stroke:0;">(26 Unique Warnings)</div>
<div class="a" style="left:47px;top:647px;width:868px;height:102px;background:#fff;overflow:hidden" id="dp">
<div class="a" style="left:0;top:0;width:868px;height:23px;background:#fcfcfc;border-bottom:1px solid #e2eaf6"></div>
<div class="a" style="left:450px;top:0;width:1px;height:23px;background:#e4ebf6"></div>
<div class="a" style="left:499px;top:0;width:1px;height:23px;background:#e4ebf6"></div>
<div class="a" style="left:559px;top:0;width:1px;height:23px;background:#e4ebf6"></div>
<div class="a" style="left:627px;top:0;width:1px;height:23px;background:#e4ebf6"></div>
<div class="a" style="left:744px;top:0;width:1px;height:23px;background:#e4ebf6"></div>
<div class="a" style="left:4px;top:41px;width:740px;height:16px;background:#f0f0f0"></div>
<div class="a" style="left:450px;top:24px;width:1px;height:80px;background:#f2f2f2"></div>
<div class="a" style="left:499px;top:24px;width:1px;height:80px;background:#f2f2f2"></div>
<div class="a" style="left:559px;top:24px;width:1px;height:80px;background:#f2f2f2"></div>
<div class="a" style="left:627px;top:24px;width:1px;height:80px;background:#f2f2f2"></div>
<div class="a" style="left:744px;top:24px;width:1px;height:80px;background:#f2f2f2"></div>
<div class="t" style="left:5.8px;top:6.5px;font-size:11px;letter-spacing:-0.2px">Warning</div>
<div class="t" style="left:456.8px;top:6.5px;font-size:11px;letter-spacing:-0.56px">Priority</div>
<div class="t" style="left:505.7px;top:6.5px;font-size:11px;letter-spacing:-0.43px">Count</div>
<div class="t" style="left:565.0px;top:6.5px;font-size:11px;letter-spacing:-0.46px">Last Frame</div>
<div class="t" style="left:634.4px;top:6.5px;font-size:11px;letter-spacing:-0.12px">Last Tick</div>
<div class="a" style="left:0;top:40px;width:868px;height:1px;background:#f0f0f0"></div>
<div class="t" style="left:5.8px;top:27.5px;font-size:11px;letter-spacing:-0.21354166666666666px">PMCPB: Thread0 Instructions Per Cycle is too low</div>
<div class="t" style="left:457.0px;top:27.5px;font-size:11px;letter-spacing:-0.1px">1</div>
<div class="t" style="left:506.0px;top:27.5px;font-size:11px;letter-spacing:-0.1px">93.20%</div>
<div class="t" style="left:565.0px;top:27.5px;font-size:11px;letter-spacing:-0.1px">1917</div>
<div class="t" style="left:634.6px;top:27.5px;font-size:11px;letter-spacing:-0.1px">11,200,161,115</div>
<div class="a" style="left:0;top:57px;width:868px;height:1px;background:#f0f0f0"></div>
<div class="t" style="left:5.8px;top:44.5px;font-size:11px;letter-spacing:-0.1708695652173916px">Too many threads blocking on Critical Sections</div>
<div class="t" style="left:457.0px;top:44.5px;font-size:11px;letter-spacing:-0.1px">1</div>
<div class="t" style="left:506.0px;top:44.5px;font-size:11px;letter-spacing:-0.1px">85.74%</div>
<div class="t" style="left:565.0px;top:44.5px;font-size:11px;letter-spacing:-0.1px">1917</div>
<div class="t" style="left:634.6px;top:44.5px;font-size:11px;letter-spacing:-0.1px">11,200,161,115</div>
<div class="a" style="left:0;top:74px;width:868px;height:1px;background:#f0f0f0"></div>
<div class="t" style="left:5.8px;top:61.5px;font-size:11px;letter-spacing:-0.15210526315789477px">CPU: Too many context switches (CPU 3)</div>
<div class="t" style="left:457.0px;top:61.5px;font-size:11px;letter-spacing:-0.1px">1</div>
<div class="t" style="left:506.0px;top:61.5px;font-size:11px;letter-spacing:-0.1px">495</div>
<div class="t" style="left:565.0px;top:61.5px;font-size:11px;letter-spacing:-0.1px">1965</div>
<div class="t" style="left:634.6px;top:61.5px;font-size:11px;letter-spacing:-0.1px">11,192,456,410</div>
<div class="a" style="left:0;top:91px;width:868px;height:1px;background:#f0f0f0"></div>
<div class="t" style="left:5.8px;top:78.5px;font-size:11px;letter-spacing:-0.2197297297297296px">PMCPB: Thread0 L1 Misses are too high</div>
<div class="t" style="left:457.0px;top:78.5px;font-size:11px;letter-spacing:-0.1px">1</div>
<div class="t" style="left:506.0px;top:78.5px;font-size:11px;letter-spacing:-0.1px">320</div>
<div class="t" style="left:565.0px;top:78.5px;font-size:11px;letter-spacing:-0.1px">1960</div>
<div class="t" style="left:634.6px;top:78.5px;font-size:11px;letter-spacing:-0.1px">11,188,271,151</div>
<div class="a" style="left:0;top:108px;width:868px;height:1px;background:#f0f0f0"></div>
<div class="t" style="left:5.8px;top:95.5px;font-size:11px;letter-spacing:-0.15210526315789477px">CPU: Too many context switches (CPU 4)</div>
<div class="t" style="left:457.0px;top:95.5px;font-size:11px;letter-spacing:-0.1px">1</div>
<div class="t" style="left:506.0px;top:95.5px;font-size:11px;letter-spacing:-0.1px">307</div>
<div class="t" style="left:565.0px;top:95.5px;font-size:11px;letter-spacing:-0.1px">1965</div>
<div class="t" style="left:634.6px;top:95.5px;font-size:11px;letter-spacing:-0.1px">11,192,456,410</div>
</div>
<div class="a" style="left:915px;top:647px;width:16px;height:102px;background:#f0f0f0"></div>
<div class="a" style="left:915px;top:665px;width:15px;height:16px;background:#cdcdcd"></div>
<svg width="950" height="768" viewBox="0 0 950 768" style="position:absolute;left:0;top:0">
<defs>
<linearGradient id="gPause" x1="0" y1="0" x2="0" y2="1"><stop offset="0" stop-color="#8fb4f4"/><stop offset="0.42" stop-color="#3a6fe6"/><stop offset="0.5" stop-color="#0a35c8"/><stop offset="0.78" stop-color="#1560e8"/><stop offset="1" stop-color="#48d4ff"/></linearGradient>
<linearGradient id="gRed" x1="0" y1="0" x2="0" y2="1"><stop offset="0" stop-color="#f4c4b4"/><stop offset="0.38" stop-color="#ee6a58"/><stop offset="0.5" stop-color="#e80c00"/><stop offset="0.75" stop-color="#f41818"/><stop offset="1" stop-color="#ff98b0"/></linearGradient>
<linearGradient id="gWarn" x1="0" y1="0" x2="0" y2="1"><stop offset="0" stop-color="#fdf2a0"/><stop offset="0.6" stop-color="#f2d838"/><stop offset="1" stop-color="#e4b818"/></linearGradient>
<linearGradient id="gLens" x1="0" y1="0" x2="0" y2="1"><stop offset="0" stop-color="#f4fbff"/><stop offset="1" stop-color="#b8d8f0"/></linearGradient>
<linearGradient id="gHand" x1="0" y1="0" x2="1" y2="1"><stop offset="0" stop-color="#f8e060"/><stop offset="1" stop-color="#d09810"/></linearGradient>
<linearGradient id="gBar" x1="0" y1="0" x2="0" y2="1"><stop offset="0" stop-color="#fff"/><stop offset="0.7" stop-color="#fff" stop-opacity="0.9"/><stop offset="1" stop-color="#fff" stop-opacity="0.35"/></linearGradient>
</defs>
<circle cx="57" cy="38.3" r="7.2" fill="#c8dcf8" opacity="0.7"/>
<circle cx="57" cy="38.3" r="6.8" fill="url(#gPause)"/>
<ellipse cx="57" cy="43.2" rx="4.2" ry="1.8" fill="#58e0ff" opacity="0.75"/>
<ellipse cx="57" cy="33.6" rx="4.4" ry="2" fill="#dfeafc" opacity="0.45"/>
<rect x="54.7" y="34.4" width="1.3" height="7.4" fill="url(#gBar)"/><rect x="58.2" y="34.4" width="1.3" height="7.4" fill="url(#gBar)"/>
<circle cx="141" cy="38.7" r="4.9" fill="url(#gRed)" stroke="#e4683c" stroke-width="0.9"/>
<ellipse cx="141" cy="36.2" rx="3.2" ry="1.7" fill="#fff" opacity="0.35"/>
<path d="M242 38 L247.4 38 L244.7 41.2 Z" fill="#000"/>
<path d="M425 38 L430.4 38 L427.7 41.2 Z" fill="#8c8c8c"/>
<circle cx="258.5" cy="37.3" r="6.4" fill="#cfcfcf" stroke="#c4c4c4" stroke-width="0.6"/>
<path d="M258.5 32 L258.5 38 L262 38" fill="none" stroke="#dcdcdc" stroke-width="1"/>
<circle cx="263.3" cy="41.8" r="4.2" fill="#e4e4e4" stroke="#bcbcbc" stroke-width="0.9"/>
<path d="M262 39.4 L265.6 41.8 L262 44.2 Z" fill="#a8a8a8"/>
<path d="M338.4 31.6 L347.3 31.6 L350.5 34.8 L350.5 46.5 L338.4 46.5 Z" fill="#e6e6e6" stroke="#c6c6c6" stroke-width="0.9"/>
<rect x="340.3" y="35.2" width="8.6" height="8.6" fill="#bdbdbd"/>
<rect x="342.6" y="35.2" width="4" height="8.6" fill="#cfcfcf"/>
<rect x="340.9" y="36" width="1.1" height="1.1" fill="#ececec"/><rect x="347.4" y="36" width="1.1" height="1.1" fill="#ececec"/>
<rect x="340.9" y="38.2" width="1.1" height="1.1" fill="#ececec"/><rect x="347.4" y="38.2" width="1.1" height="1.1" fill="#ececec"/>
<rect x="340.9" y="40.4" width="1.1" height="1.1" fill="#ececec"/><rect x="347.4" y="40.4" width="1.1" height="1.1" fill="#ececec"/>
<rect x="340.9" y="42.6" width="1.1" height="1.1" fill="#ececec"/><rect x="347.4" y="42.6" width="1.1" height="1.1" fill="#ececec"/>
<circle cx="349.3" cy="41.8" r="4.2" fill="#e4e4e4" stroke="#bcbcbc" stroke-width="0.9"/>
<path d="M348 39.4 L351.6 41.8 L348 44.2 Z" fill="#a8a8a8"/>
<rect x="436" y="32" width="1" height="15" fill="#b4b4b4"/>
<rect x="446" y="32" width="11" height="13.4" fill="#dfe7f4"/>
<rect x="448" y="32" width="0.6" height="13.4" fill="#c0cce0"/>
<rect x="450.2" y="32" width="0.6" height="13.4" fill="#c0cce0"/>
<rect x="452.4" y="32" width="0.6" height="13.4" fill="#c0cce0"/>
<rect x="454.6" y="32" width="0.6" height="13.4" fill="#c0cce0"/>
<rect x="446" y="34" width="11" height="0.6" fill="#c0cce0"/>
<rect x="446" y="36.2" width="11" height="0.6" fill="#c0cce0"/>
<rect x="446" y="38.4" width="11" height="0.6" fill="#c0cce0"/>
<rect x="446" y="40.6" width="11" height="0.6" fill="#c0cce0"/>
<rect x="446" y="42.8" width="11" height="0.6" fill="#c0cce0"/>
<rect x="446" y="44.8" width="11" height="1" fill="#7a8088"/>
<path d="M446.3 39 L449.5 39 L451.2 44.2 L454.3 32.8 L456.6 39.5" fill="none" stroke="#3a9464" stroke-width="1.2"/>
<g font-family="Liberation Sans" font-weight="bold" font-size="5.5" fill="#2a54c0"><text x="441.6" y="36.3">1</text><text x="441.6" y="41">2</text><text x="441.6" y="45.7">3</text></g>
<path d="M582.9 32.6 L590.6 45.2 L575.2 45.2 Z" fill="url(#gWarn)" stroke="#b48c14" stroke-width="1" stroke-linejoin="round"/>
<path d="M582.1 35.8 L583.8 35.8 L583.4 41.4 L582.5 41.4 Z" fill="#333"/><circle cx="582.95" cy="43.1" r="0.95" fill="#333"/>
<rect x="661.6" y="35.2" width="11" height="10.4" fill="#f4f8ff" stroke="#5f7cae" stroke-width="1"/>
<rect x="662.1" y="35.7" width="10" height="2" fill="#c8d8f0"/>
<rect x="663.6" y="40.6" width="1.6" height="1" fill="#8aa0c8"/><rect x="666.4" y="40.6" width="4.6" height="1" fill="#8aa0c8"/>
<rect x="663.6" y="42.8" width="1.6" height="1" fill="#8aa0c8"/><rect x="666.4" y="42.8" width="4.6" height="1" fill="#8aa0c8"/>
<path d="M663.4 37.6 L668 32.8 L673.6 32.2 L675 33.4 L675 36.4 L671.6 37.4 L669.4 39.6 L667.2 37.2 L665 38.8 Z" fill="url(#gHand)" stroke="#c89c20" stroke-width="0.5"/>
<path d="M674.6 32 L677.2 32 L677.2 38.2 L674.6 36.6 Z" fill="#3a9a48"/>
<path d="M59.300000000000004 466.1 L63.900000000000006 470.6" stroke="#8a6a20" stroke-width="3.2" stroke-linecap="round"/><path d="M59.5 466.3 L63.7 470.4" stroke="#eec050" stroke-width="1.8" stroke-linecap="round"/><circle cx="55.7" cy="462.5" r="5.1" fill="url(#gLens)" stroke="#7f8fa8" stroke-width="1.4"/><rect x="52.900000000000006" y="461.9" width="5.6" height="1.3" fill="#000"/><rect x="55.050000000000004" y="459.7" width="1.3" height="5.6" fill="#000"/>
<path d="M82.0 466.1 L86.60000000000001 470.6" stroke="#8a6a20" stroke-width="3.2" stroke-linecap="round"/><path d="M82.2 466.3 L86.4 470.4" stroke="#eec050" stroke-width="1.8" stroke-linecap="round"/><circle cx="78.4" cy="462.5" r="5.1" fill="url(#gLens)" stroke="#7f8fa8" stroke-width="1.4"/><rect x="75.60000000000001" y="461.9" width="5.6" height="1.3" fill="#000"/>
<rect x="97.5" y="459.3" width="12.4" height="10.4" fill="#e6edff" stroke="#6a86dc" stroke-width="0.8"/>
<rect x="97.5" y="459.3" width="12.4" height="2.4" fill="#3f6ee4"/>
<rect x="98.5" y="460" width="1.2" height="1" fill="#fff"/>
<path d="M99.6 465.7 L107.8 465.7 M101.8 463.6 L99.6 465.7 L101.8 467.8 M105.6 463.6 L107.8 465.7 L105.6 467.8" fill="none" stroke="#000" stroke-width="1.05"/>
<circle cx="878" cy="464.6" r="7.6" fill="#dedede" stroke="#c2c2c2" stroke-width="1.2"/>
<circle cx="878" cy="464.6" r="6" fill="none" stroke="#d2d2d2" stroke-width="0.7"/>
<path d="M878 461.2 L878 466 L881.6 466" fill="none" stroke="#b0b0b0" stroke-width="1.1"/>
<rect x="893.2" y="457.3" width="13.6" height="14.4" fill="#b8b8b8"/>
<rect x="895.6" y="458.6" width="8.8" height="5.4" fill="#cacaca"/><rect x="895.6" y="465" width="8.8" height="5.6" fill="#cacaca"/>
<rect x="893.9" y="458.2" width="1" height="1.1" fill="#e4e4e4"/><rect x="905.1" y="458.2" width="1" height="1.1" fill="#e4e4e4"/>
<rect x="893.9" y="460.6" width="1" height="1.1" fill="#e4e4e4"/><rect x="905.1" y="460.6" width="1" height="1.1" fill="#e4e4e4"/>
<rect x="893.9" y="463" width="1" height="1.1" fill="#e4e4e4"/><rect x="905.1" y="463" width="1" height="1.1" fill="#e4e4e4"/>
<rect x="893.9" y="465.4" width="1" height="1.1" fill="#e4e4e4"/><rect x="905.1" y="465.4" width="1" height="1.1" fill="#e4e4e4"/>
<rect x="893.9" y="467.8" width="1" height="1.1" fill="#e4e4e4"/><rect x="905.1" y="467.8" width="1" height="1.1" fill="#e4e4e4"/>
<rect x="893.9" y="470.2" width="1" height="1.1" fill="#e4e4e4"/><rect x="905.1" y="470.2" width="1" height="1.1" fill="#e4e4e4"/>
<ellipse cx="920.6" cy="468.6" rx="3.6" ry="2.7" fill="#c2c2c2" transform="rotate(-20 920.6 468.6)"/>
<path d="M923.6 468.2 L923.6 457.4 C925 460.2 928.2 461.6 927.4 466.6" fill="none" stroke="#c2c2c2" stroke-width="1.5"/>
<path d="M57.0 441.20000000000005 L53.0 444.6 L57.0 448.0" fill="none" stroke="#585858" stroke-width="2.2"/>
<path d="M920.4 441.20000000000005 L924.4 444.6 L920.4 448.0" fill="none" stroke="#585858" stroke-width="2.2"/>
<path d="M919.2 515.0 L922.6 511.0 L926.0 515.0" fill="none" stroke="#585858" stroke-width="2.2"/>
<path d="M919.2 610.6 L922.6 614.6 L926.0 610.6" fill="none" stroke="#585858" stroke-width="2.2"/>
<path d="M919.2 658.0 L922.6 654.0 L926.0 658.0" fill="none" stroke="#585858" stroke-width="2.2"/>
<path d="M919.2 738.3 L922.6 742.3 L926.0 738.3" fill="none" stroke="#585858" stroke-width="2.2"/>
<path d="M916.2 494.45 L919.5 491.15000000000003 L922.8 494.45" fill="none" stroke="#000" stroke-width="1.5"/>
<path d="M916.2 498.54999999999995 L919.5 495.25 L922.8 498.54999999999995" fill="none" stroke="#000" stroke-width="1.5"/>
<path d="M916.2 637.4499999999999 L919.5 634.15 L922.8 637.4499999999999" fill="none" stroke="#000" stroke-width="1.5"/>
<path d="M916.2 641.55 L919.5 638.25 L922.8 641.55" fill="none" stroke="#000" stroke-width="1.5"/>
</svg>
</body></html>
